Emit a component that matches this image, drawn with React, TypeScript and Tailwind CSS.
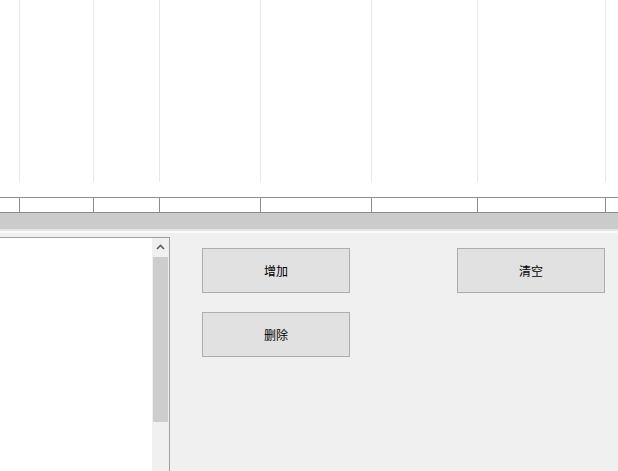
import React from "react";

const cols = [20, 74, 66, 101, 111, 106, 128];

const Btn: React.FC<{ label: string }> = ({ label }) => (
  <button className="w-[148px] h-[45px] bg-[#e1e1e1] border border-[#adadad] text-[12px] text-black leading-none">
    {label}
  </button>
);

export default function App() {
  return (
    <div
      className="w-[618px] h-[471px] overflow-hidden bg-white flex flex-col"
      style={{ fontFamily: '"Noto Sans CJK SC", "Liberation Sans", sans-serif' }}
    >
      {/* grid area */}
      <div className="h-[197px] flex shrink-0">
        {cols.map((w, i) => (
          <div key={i} style={{ width: w }} className="flex justify-end shrink-0">
            <div className="w-px h-[182px] bg-[#e9e9e9]" />
          </div>
        ))}
      </div>
      {/* header row */}
      <div className="h-[16px] flex shrink-0 border-y border-[#8c8c8c]">
        {cols.map((w, i) => (
          <div key={i} style={{ width: w }} className="shrink-0 border-r border-[#8c8c8c]" />
        ))}
      </div>
      <div className="h-[16px] bg-[#cbcbcb] shrink-0" />
      <div className="h-[8px] bg-[#f0f0f0] shrink-0 flex flex-col">
        <div className="h-[2px] bg-[#e6e6e6]" />
        <div className="h-[2px] bg-[#f9f9f9]" />
      </div>
      {/* bottom panel */}
      <div className="flex-1 flex bg-[#f0f0f0]">
        <div className="w-[170px] bg-white border-t border-r border-[#a0a0a0] flex justify-end shrink-0">
          <div className="w-[17px] bg-[#f0f0f0] flex flex-col">
            <div className="h-[17px] flex items-center justify-center">
              <svg width="9" height="6" viewBox="0 0 9 6">
                <path d="M1 5 L4.5 1.5 L8 5" fill="none" stroke="#606060" strokeWidth="1.6" />
              </svg>
            </div>
            <div className="mt-[2px] mx-[1px] h-[165px] bg-[#cdcdcd]" />
          </div>
        </div>
        <div className="flex pt-[11px] pl-[32px]">
          <div className="flex flex-col gap-[19px]">
            <Btn label="增加" />
            <Btn label="删除" />
          </div>
          <div className="ml-[107px]">
            <Btn label="清空" />
          </div>
        </div>
      </div>
    </div>
  );
}
